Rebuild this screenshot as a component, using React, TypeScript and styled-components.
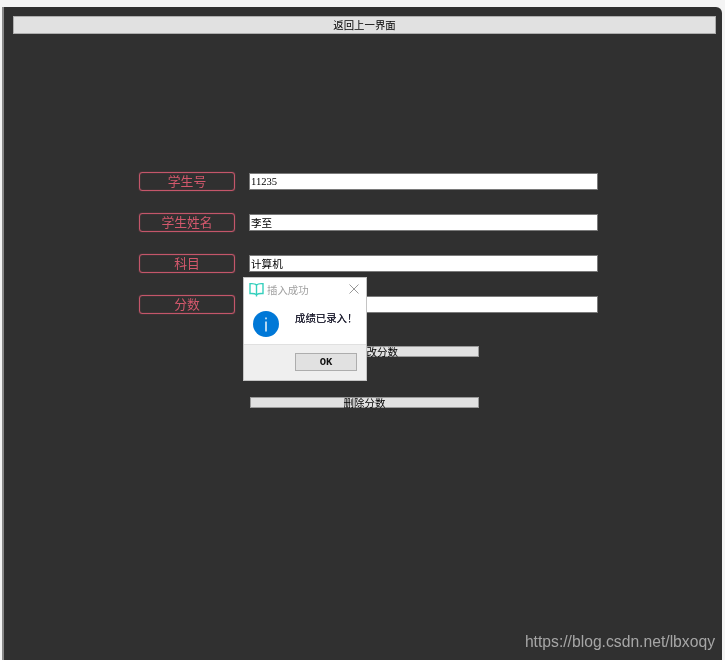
import React from 'react';
import styled, { createGlobalStyle } from 'styled-components';

const GlobalStyle = createGlobalStyle`
  html, body {
    margin: 0;
    padding: 0;
    background: #f4f4f4;
  }
`;

const Screen = styled.div`
  position: relative;
  width: 725px;
  height: 660px;
  padding: 7px 3px 0 2px;
  box-sizing: border-box;
  overflow: hidden;
  filter: blur(0.3px);
`;

const Window = styled.div`
  height: 653px;
  box-sizing: border-box;
  padding: 9px 5px 0 9px;
  background: #303030;
  border-left: 2px solid #8a8a8a;
  border-top-right-radius: 6px;
  font-family: "Liberation Sans", "Noto Sans CJK SC", sans-serif;
`;

const BackButton = styled.button`
  display: block;
  width: 703px;
  height: 18px;
  padding: 0;
  box-sizing: border-box;
  background: #e1e1e1;
  border: 1px solid #adadad;
  color: #000;
  font-family: "Noto Sans CJK SC", sans-serif;
  font-size: 10.4px;
  line-height: 16px;
`;

const Form = styled.div`
  display: flex;
  flex-direction: column;
  gap: 22px;
  margin: 138px 0 0 126px;
`;

const Row = styled.div`
  display: flex;
  align-items: center;
  gap: 14px;
  height: 19px;
`;

const Label = styled.div`
  width: 96px;
  height: 19px;
  box-sizing: border-box;
  border: 1px solid #c4566a;
  box-shadow: 0 0 1px #c4566a, inset 0 0 1px #c4566a;
  border-radius: 3px;
  color: #d2586c;
  font-family: "Noto Sans CJK SC", sans-serif;
  font-size: 12.8px;
  line-height: 16px;
  text-align: center;
`;

const Field = styled.input`
  width: 349px;
  height: 17px;
  padding: 0 1px;
  box-sizing: border-box;
  background: #fff;
  border: 1px solid #7a7a7a;
  outline: none;
  color: #000;
  font-family: "Liberation Serif", "Noto Sans CJK SC", serif;
  font-size: 10.6px;
`;

const Actions = styled.div`
  display: flex;
  flex-direction: column;
  gap: 40px;
  margin: 32px 0 0 237px;
`;

const ActionButton = styled.button`
  display: block;
  width: 229px;
  height: 11px;
  padding: 0;
  box-sizing: border-box;
  background: #e1e1e1;
  border: 1px solid #9a9a9a;
  color: #000;
  font-family: "Noto Sans CJK SC", sans-serif;
  font-size: 10.5px;
  line-height: 8px;
  white-space: nowrap;
  overflow: visible;
`;

const Dialog = styled.div`
  position: absolute;
  left: 243px;
  top: 277px;
  width: 124px;
  height: 104px;
  box-sizing: border-box;
  display: flex;
  flex-direction: column;
  background: #fff;
  border: 1px solid #c4c4c4;
  font-family: "Noto Sans CJK SC", sans-serif;
`;

const DialogTitle = styled.div`
  display: flex;
  align-items: center;
  gap: 3px;
  height: 22px;
  padding: 0 7px 0 5px;
  color: #a0a0a0;
  font-size: 10.4px;
`;

const TitleText = styled.span`
  flex: 1;
`;

const DialogBody = styled.div`
  flex: 1;
  display: flex;
  align-items: flex-start;
  gap: 16px;
  padding: 11px 0 0 9px;
  color: #223;
  font-size: 10.4px;
`;

const Message = styled.span`
  margin-top: -1px;
  text-shadow: 0 0 0.6px #223;
`;

const DialogFooter = styled.div`
  display: flex;
  justify-content: flex-end;
  align-items: flex-start;
  height: 36px;
  padding: 8px 9px 0 0;
  box-sizing: border-box;
  background: #efefef;
  border-top: 1px solid #e0e0e0;
`;

const OkButton = styled.button`
  width: 62px;
  height: 18px;
  padding: 0;
  box-sizing: border-box;
  background: #e1e1e1;
  border: 1px solid #adadad;
  color: #111;
  font-family: "Liberation Mono", monospace;
  font-size: 10.5px;
  font-weight: 700;
`;

const Watermark = styled.div`
  position: absolute;
  right: 10px;
  bottom: 9px;
  color: #a6a6a6;
  font-family: "Liberation Sans", sans-serif;
  font-size: 15.7px;
  line-height: 18px;
`;

const BookIcon = () => (
  <svg width="15" height="15" viewBox="0 0 15 15" fill="none" stroke="#35d0bd" strokeWidth="1.4">
    <path d="M7.5 3 C6 1.6 3 1.5 1 1.7 V11.6 C3 11.4 6 11.5 7.5 12.8 C9 11.5 12 11.4 14 11.6 V1.7 C12 1.5 9 1.6 7.5 3 Z" />
    <path d="M7.5 3 V14.5" />
  </svg>
);

const CloseIcon = () => (
  <svg width="10" height="10" viewBox="0 0 10 10" stroke="#999" strokeWidth="1">
    <path d="M0.5 0.5 L9.5 9.5 M9.5 0.5 L0.5 9.5" />
  </svg>
);

const InfoIcon = () => (
  <svg width="26" height="26" viewBox="0 0 26 26">
    <circle cx="13" cy="13" r="13" fill="#0078d7" />
    <rect x="12.3" y="10.5" width="1.4" height="10" fill="#fff" />
    <rect x="12.3" y="6.5" width="1.4" height="1.8" fill="#fff" />
  </svg>
);

const fields = [
  { label: '学生号', value: '11235' },
  { label: '学生姓名', value: '李至' },
  { label: '科目', value: '计算机' },
  { label: '分数', value: '' },
];

export default function App() {
  return (
    <>
      <GlobalStyle />
      <Screen>
        <Window>
          <BackButton>返回上一界面</BackButton>
          <Form>
            {fields.map((f) => (
              <Row key={f.label}>
                <Label>{f.label}</Label>
                <Field value={f.value} readOnly />
              </Row>
            ))}
          </Form>
          <Actions>
            <ActionButton>插入/修改分数</ActionButton>
            <ActionButton>删除分数</ActionButton>
          </Actions>
        </Window>
        <Dialog>
          <DialogTitle>
            <BookIcon />
            <TitleText>插入成功</TitleText>
            <CloseIcon />
          </DialogTitle>
          <DialogBody>
            <InfoIcon />
            <Message>成绩已录入！</Message>
          </DialogBody>
          <DialogFooter>
            <OkButton>OK</OkButton>
          </DialogFooter>
        </Dialog>
        <Watermark>https://blog.csdn.net/lbxoqy</Watermark>
      </Screen>
    </>
  );
}
